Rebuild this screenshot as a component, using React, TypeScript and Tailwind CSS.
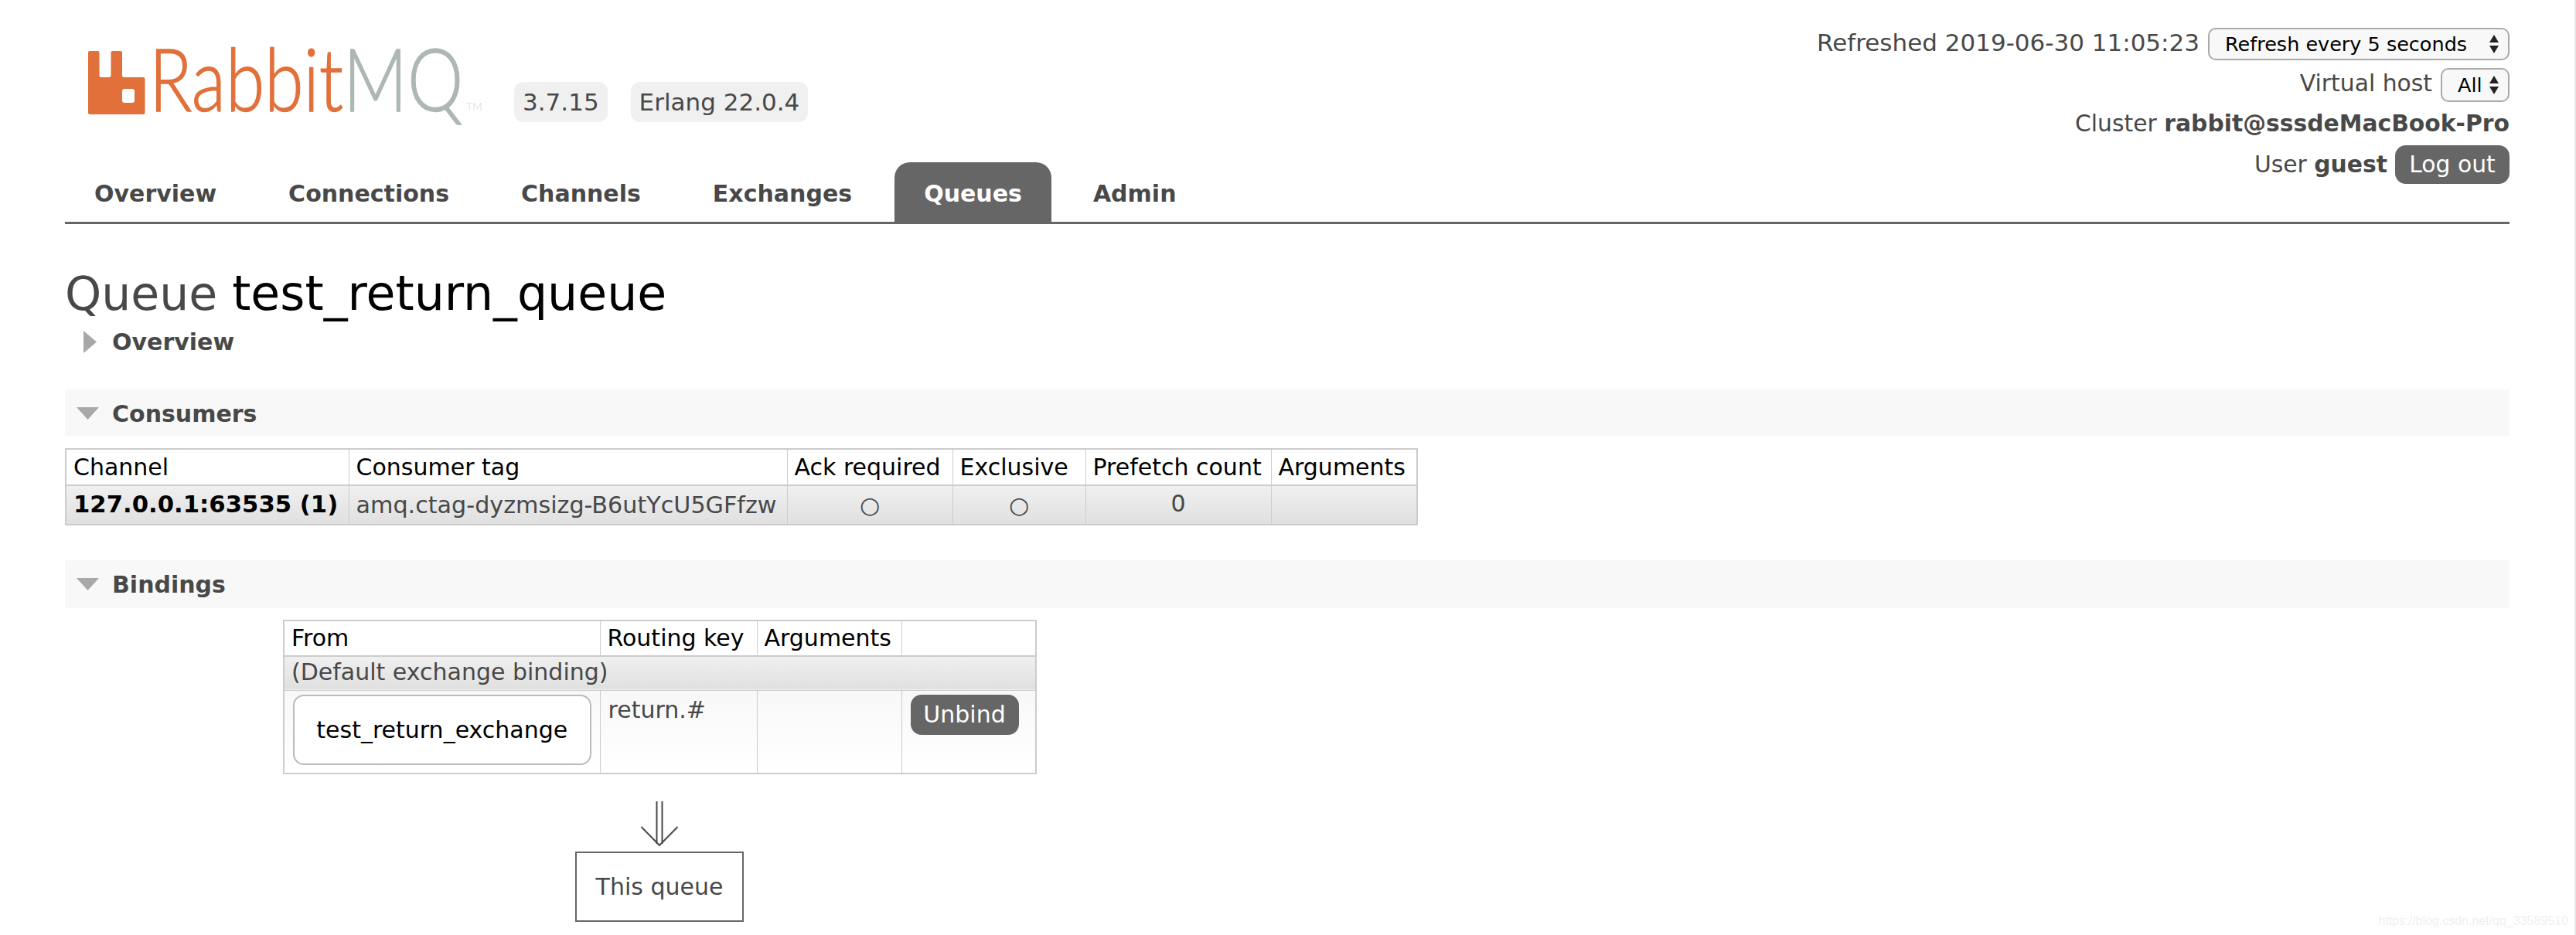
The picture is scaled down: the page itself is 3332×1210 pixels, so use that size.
import React from "react";

const tabs = ["Overview", "Connections", "Channels", "Exchanges", "Queues", "Admin"];
const font = "font-['DejaVu_Sans','Liberation_Sans',sans-serif]";

function Logo() {
  return (
    <svg width="551" height="140" viewBox="0 0 551 140" className="block shrink-0">
      <path
        transform="translate(0 33)"
        d="M0 3 Q0 1 2 1 H12.5 Q14.5 1 14.5 3 V32 Q14.5 35 17 35 H27 Q29.5 35 29.5 32 V3 Q29.5 1 31.5 1 H42 Q44 1 44 3 V32 Q44 35 46 35 H71 Q73.5 35 73.5 37 V81 Q73.5 83 71 83 H2 Q0 83 0 81 Z M47 50 Q44 50 44 53 V65 Q44 68 47 68 H57 Q60 68 60 65 V53 Q60 50 57 50 Z"
        fill="#e2703a"
        fillRule="evenodd"
      />
      <text transform="translate(79 112) scale(0.815 1)" fontFamily="Lato, 'Open Sans', sans-serif" fontWeight="300" fontSize="112" fill="#e2703a" stroke="#e2703a" strokeWidth="1.4">
        Rabbit<tspan fill="#adb8b2" stroke="#adb8b2">MQ</tspan>
      </text>
      <text x="489" y="111" fontFamily="Lato, 'Open Sans', sans-serif" fontWeight="300" fontSize="14" fill="#cfd6d2">TM</text>
    </svg>
  );
}

function Updown() {
  return (
    <svg width="14" height="26" viewBox="0 0 14 26" className="pointer-events-none absolute right-[11px] top-1/2 -translate-y-1/2">
      <path d="M7 1 L13 11 H1 Z M1 15 H13 L7 25 Z" fill="#222" />
    </svg>
  );
}

function Sel({ label, className }: { label: string; className: string }) {
  return (
    <div className={`relative flex items-center rounded-[10px] border-2 border-[#aaa] bg-[#f8f8f8] text-[25.5px] text-black ${className}`}>
      {label}
      <Updown />
    </div>
  );
}

function Th({ children, className = "h-[47px]" }: { children?: React.ReactNode; className?: string }) {
  return (
    <th className={`border border-[#ccc] bg-white px-[9px] text-left align-middle text-[30px] font-normal leading-none text-black ${className}`}>
      {children}
    </th>
  );
}

function Section({ title, bar, children }: { title: string; bar: string; children: React.ReactNode }) {
  return (
    <section>
      <div className={`flex items-center bg-[#f8f8f8] ${bar}`}>
        <svg width="29" height="16" viewBox="0 0 29 16" className="ml-[15px]">
          <path d="M0 0 H29 L14.5 16 Z" fill="#a8a8a8" />
        </svg>
        <h2 className="ml-[17px] text-[30px] font-bold text-[#484848]">{title}</h2>
      </div>
      {children}
    </section>
  );
}

export default function App() {
  return (
    <div className={`relative h-[1210px] w-[3332px] overflow-hidden border-r-2 border-[#e6e6e6] bg-white pl-[84px] pr-[84px] text-[#484848] ${font}`}>
      <header className="relative flex h-[290px] items-start justify-between border-b-[3px] border-[#666]">
        <div className="flex flex-col">
          <div className="ml-[30px] mt-[32px] flex h-[178px] items-start">
            <Logo />
            <div className="mt-[74px] flex gap-[30px] text-[31px]">
              <span className="flex h-[52px] items-center rounded-[12px] bg-[#f0f0f0] px-[11px]">3.7.15</span>
              <span className="flex h-[52px] items-center rounded-[12px] bg-[#f0f0f0] px-[11px]">Erlang 22.0.4</span>
            </div>
          </div>
          <ul className="flex h-[77px] text-[30px] font-bold">
            {tabs.map((t) => (
              <li
                key={t}
                className={
                  t === "Queues"
                    ? "mr-[16px] flex items-center rounded-t-[20px] bg-[#666] px-[38px] pt-[3px] text-white"
                    : "mr-[17px] flex items-center px-[38px] pt-[3px]"
                }
              >
                {t}
              </li>
            ))}
          </ul>
        </div>
        <div className="flex flex-col items-end pt-[36px] text-[29.8px]">
          <div className="flex h-[42px] items-center gap-[11px]">
            <span className="-mt-[3px] text-[31px]">Refreshed 2019-06-30 11:05:23</span>
            <Sel label="Refresh every 5 seconds" className="h-[42px] w-[390px] pl-[20px]" />
          </div>
          <div className="mt-[10px] flex h-[44px] items-center gap-[11px]">
            <span className="-mt-[3px]">Virtual host</span>
            <Sel label="All" className="h-[44px] w-[89px] pl-[20px]" />
          </div>
          <div className="mt-[7px] flex h-[42px] items-center">
            <span>
              Cluster <b>rabbit@sssdeMacBook-Pro</b>
            </span>
          </div>
          <div className="mt-[7px] flex h-[50px] items-center gap-[10px]">
            <span>
              User <b>guest</b>
            </span>
            <span className="flex h-[50px] w-[148px] items-center justify-center rounded-[14px] bg-[#666] text-white">Log out</span>
          </div>
        </div>
      </header>

      <h1 className="mt-[48px] h-[84px] text-[60px] leading-[84px]">
        Queue <span className="text-[61.7px] text-black">test_return_queue</span>
      </h1>

      <div className="mt-[1px] flex h-[38px] items-center">
        <svg width="17" height="29" viewBox="0 0 17 29" className="ml-[24px]">
          <path d="M0 0 L17 14.5 L0 29 Z" fill="#a8a8a8" />
        </svg>
        <h2 className="ml-[20px] text-[30px] font-bold text-[#484848]">Overview</h2>
      </div>

      <div className="mt-[43px]">
        <Section title="Consumers" bar="h-[60px] pt-[2px]">
          <table className="mt-[16px] w-[1748px] table-fixed border-collapse border-2 border-[#ccc] text-[30px]">
            <colgroup>
              <col className="w-[366px]" />
              <col className="w-[567px]" />
              <col className="w-[214px]" />
              <col className="w-[172px]" />
              <col className="w-[240px]" />
              <col className="w-[189px]" />
            </colgroup>
            <thead>
              <tr className="border-b-2 border-[#ccc]">
                <Th>Channel</Th>
                <Th>Consumer tag</Th>
                <Th>Ack required</Th>
                <Th>Exclusive</Th>
                <Th>Prefetch count</Th>
                <Th>Arguments</Th>
              </tr>
            </thead>
            <tbody>
              <tr className="h-[49px] bg-gradient-to-b from-[#f0f0f0] to-[#e0e0e0]">
                <td className="whitespace-nowrap border border-[#ccc] px-[9px] text-[30.7px] font-bold text-black">127.0.0.1:63535 (1)</td>
                <td className="whitespace-nowrap border border-[#ccc] px-[9px] text-[30.2px]">amq.ctag-dyzmsizg-B6utYcU5GFfzw</td>
                <td className="border border-[#ccc] text-center">○</td>
                <td className="border border-[#ccc] text-center">○</td>
                <td className="border border-[#ccc] pb-[4px] text-center">0</td>
                <td className="border border-[#ccc]"></td>
              </tr>
            </tbody>
          </table>
        </Section>
      </div>

      <div className="mt-[45px]">
        <Section title="Bindings" bar="h-[62px]">
          <table className="ml-[282px] mt-[15px] w-[973px] table-fixed border-collapse border-2 border-[#ccc] text-[30px]">
            <colgroup>
              <col className="w-[409px]" />
              <col className="w-[203px]" />
              <col className="w-[187px]" />
              <col className="w-[174px]" />
            </colgroup>
            <thead>
              <tr className="border-b-2 border-[#ccc]">
                <Th className="h-[46px]">From</Th>
                <Th className="h-[46px]">Routing key</Th>
                <Th className="h-[46px]">Arguments</Th>
                <Th className="h-[46px]" />
              </tr>
            </thead>
            <tbody>
              <tr className="h-[44px] border-b border-[#ccc] bg-gradient-to-b from-[#f0f0f0] to-[#e0e0e0] leading-none">
                <td colSpan={4} className="px-[9px] pb-[2px]">(Default exchange binding)</td>
              </tr>
              <tr className="h-[108px] bg-gradient-to-b from-[#f8f8f8] to-white align-top">
                <td className="border border-[#ccc] px-[11px] pt-[5px]">
                  <div className="flex h-[91px] items-center justify-center rounded-[14px] border-2 border-[#bbb] bg-white text-black">
                    test_return_exchange
                  </div>
                </td>
                <td className="border border-[#ccc] px-[10px] pt-[2px]">return.#</td>
                <td className="border border-[#ccc]"></td>
                <td className="border border-[#ccc] px-[11px] pt-[5px]">
                  <div className="flex h-[52px] w-[140px] items-center justify-center rounded-[14px] bg-[#666] text-white">Unbind</div>
                </td>
              </tr>
            </tbody>
          </table>
          <div className="ml-[660px] mt-[35px] flex w-[218px] flex-col items-center">
            <svg width="50" height="58" viewBox="0 0 50 58" className="block">
              <path d="M21.5 0 V55 M28.5 0 V55 M1.5 33 L25 57 L48.5 33" fill="none" stroke="#484848" strokeWidth="2" />
            </svg>
            <div className="mt-[7px] flex h-[91px] w-[218px] items-center justify-center border-2 border-[#666] text-[30px]">This queue</div>
          </div>
        </Section>
      </div>

      <div className="absolute bottom-[6px] right-[8px] font-['Liberation_Sans',sans-serif] text-[16px] text-[#f0f0f0]">
        https://blog.csdn.net/qq_33589510
      </div>
    </div>
  );
}
